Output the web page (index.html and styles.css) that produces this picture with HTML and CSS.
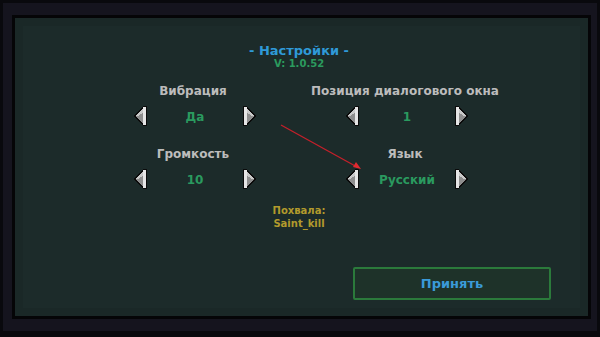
FILE: index.html
```html
<!DOCTYPE html>
<html lang="ru">
<head>
<meta charset="utf-8">
<title>Настройки</title>
<link rel="stylesheet" href="styles.css">
</head>
<body>
<div class="frame">
  <div class="panel">
    <div class="title">- Настройки -</div>
    <div class="version">V: 1.0.52</div>
    <div class="grid">
      <div class="cell">
        <div class="label">Вибрация</div>
        <div class="picker">
          <svg class="arr" width="14" height="20" viewBox="0 0 14 20"><polygon points="0,10 11,0 14,0 14,20 11,20" fill="#0b0b0b"/><polygon points="2,10 11,2 11,18" fill="#8e8e8e"/><polygon points="2,10 11,2 11,6 5,10" fill="#c9c9c9"/><rect x="10" y="1" width="3" height="18" fill="#e6e6e6"/></svg>
          <span class="val">Да</span>
          <svg class="arr flip" width="14" height="20" viewBox="0 0 14 20"><polygon points="0,10 11,0 14,0 14,20 11,20" fill="#0b0b0b"/><polygon points="2,10 11,2 11,18" fill="#8e8e8e"/><polygon points="2,10 11,2 11,6 5,10" fill="#c9c9c9"/><rect x="10" y="1" width="3" height="18" fill="#e6e6e6"/></svg>
        </div>
      </div>
      <div class="cell">
        <div class="label">Позиция диалогового окна</div>
        <div class="picker">
          <svg class="arr" width="14" height="20" viewBox="0 0 14 20"><polygon points="0,10 11,0 14,0 14,20 11,20" fill="#0b0b0b"/><polygon points="2,10 11,2 11,18" fill="#8e8e8e"/><polygon points="2,10 11,2 11,6 5,10" fill="#c9c9c9"/><rect x="10" y="1" width="3" height="18" fill="#e6e6e6"/></svg>
          <span class="val">1</span>
          <svg class="arr flip" width="14" height="20" viewBox="0 0 14 20"><polygon points="0,10 11,0 14,0 14,20 11,20" fill="#0b0b0b"/><polygon points="2,10 11,2 11,18" fill="#8e8e8e"/><polygon points="2,10 11,2 11,6 5,10" fill="#c9c9c9"/><rect x="10" y="1" width="3" height="18" fill="#e6e6e6"/></svg>
        </div>
      </div>
      <div class="cell">
        <div class="label">Громкость</div>
        <div class="picker">
          <svg class="arr" width="14" height="20" viewBox="0 0 14 20"><polygon points="0,10 11,0 14,0 14,20 11,20" fill="#0b0b0b"/><polygon points="2,10 11,2 11,18" fill="#8e8e8e"/><polygon points="2,10 11,2 11,6 5,10" fill="#c9c9c9"/><rect x="10" y="1" width="3" height="18" fill="#e6e6e6"/></svg>
          <span class="val">10</span>
          <svg class="arr flip" width="14" height="20" viewBox="0 0 14 20"><polygon points="0,10 11,0 14,0 14,20 11,20" fill="#0b0b0b"/><polygon points="2,10 11,2 11,18" fill="#8e8e8e"/><polygon points="2,10 11,2 11,6 5,10" fill="#c9c9c9"/><rect x="10" y="1" width="3" height="18" fill="#e6e6e6"/></svg>
        </div>
      </div>
      <div class="cell">
        <div class="label">Язык</div>
        <div class="picker">
          <svg class="arr" width="14" height="20" viewBox="0 0 14 20"><polygon points="0,10 11,0 14,0 14,20 11,20" fill="#0b0b0b"/><polygon points="2,10 11,2 11,18" fill="#8e8e8e"/><polygon points="2,10 11,2 11,6 5,10" fill="#c9c9c9"/><rect x="10" y="1" width="3" height="18" fill="#e6e6e6"/></svg>
          <span class="val">Русский</span>
          <svg class="arr flip" width="14" height="20" viewBox="0 0 14 20"><polygon points="0,10 11,0 14,0 14,20 11,20" fill="#0b0b0b"/><polygon points="2,10 11,2 11,18" fill="#8e8e8e"/><polygon points="2,10 11,2 11,6 5,10" fill="#c9c9c9"/><rect x="10" y="1" width="3" height="18" fill="#e6e6e6"/></svg>
        </div>
      </div>
    </div>
    <div class="praise">Похвала:<br>Saint_kill</div>
    <div class="actions">
      <button class="accept">Принять</button>
    </div>
  </div>
</div>
<svg class="annot" width="600" height="337" viewBox="0 0 600 337">
  <line x1="281" y1="125" x2="357" y2="167" stroke="#c4202a" stroke-width="1.3"/>
  <polygon points="361,169 353,167 356,162" fill="#e02a30"/>
</svg>
</body>
</html>
```
FILE: styles.css
```css
html, body {
  margin: 0;
  padding: 0;
}
body {
  width: 600px;
  height: 337px;
  background: #09090d;
  overflow: hidden;
  font-family: "DejaVu Sans", "Liberation Sans", sans-serif;
  font-weight: bold;
}
.frame {
  margin: 3px 3px 0 3px;
  width: 579px;
  height: 304px;
  padding: 12px 6px 12px 9px;
  background: #15141e;
}
.panel {
  box-sizing: border-box;
  width: 579px;
  height: 304px;
  border: 3px solid #050507;
  background: #1c2b2a;
  box-shadow: inset 0 0 0 8px #1a2827;
  padding: 25px 5px 0 0;
  display: flex;
  flex-direction: column;
}
.title {
  text-align: center;
  color: #2f9ad8;
  font-size: 13px;
  line-height: 15px;
}
.version {
  text-align: center;
  color: #2b9b5e;
  font-size: 10px;
  line-height: 12px;
}
.grid {
  margin: 14px auto 0;
  width: 424px;
  display: grid;
  grid-template-columns: 212px 212px;
  row-gap: 21px;
}
.cell {
  display: flex;
  flex-direction: column;
}
.label {
  text-align: center;
  color: #bcbcbc;
  font-size: 12px;
  line-height: 14px;
  margin-bottom: 8px;
}
.picker {
  width: 124px;
  height: 20px;
  margin-left: calc(50% - 60px);
  display: flex;
  justify-content: space-between;
  align-items: center;
}
.arr {
  display: block;
  shape-rendering: crispEdges;
}
.flip {
  transform: scaleX(-1);
}
.val {
  color: #2a9a5f;
  font-size: 12px;
  line-height: 14px;
  padding-top: 2px;
}
.praise {
  margin-top: 15px;
  text-align: center;
  color: #b29a2c;
  font-size: 10px;
  line-height: 13px;
}
.actions {
  display: flex;
  justify-content: flex-end;
  padding-right: 32px;
  margin-top: 37px;
}
.accept {
  width: 198px;
  height: 33px;
  background: #1e3229;
  border: 2px solid #2b7a3b;
  border-radius: 2px;
  color: #3a9ad8;
  font-family: "DejaVu Sans", "Liberation Sans", sans-serif;
  font-weight: bold;
  font-size: 13px;
  padding: 0;
}
.annot {
  position: absolute;
  left: 0;
  top: 0;
  pointer-events: none;
}
```
